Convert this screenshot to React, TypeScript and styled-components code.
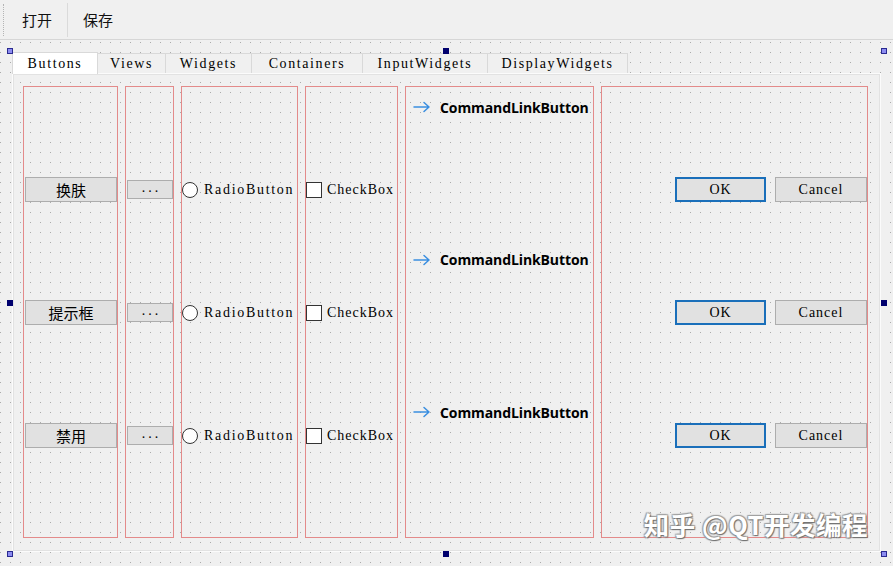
import styled, { createGlobalStyle } from "styled-components";

const GlobalStyle = createGlobalStyle`
  html, body {
    margin: 0;
    padding: 0;
    background: #f0f0f0;
    overflow: hidden;
  }
  body {
    font-family: "Liberation Serif", "Noto Sans CJK SC", serif;
  }
`;

const SERIF = `"Liberation Serif", "Noto Sans CJK SC", serif`;
const CJK = `"Noto Sans CJK SC", "Noto Sans", sans-serif`;

const Window = styled.div`
  width: 893px;
  height: 566px;
  display: flex;
  flex-direction: column;
  background: #f0f0f0;
`;

const Toolbar = styled.div`
  height: 39px;
  display: flex;
  align-items: center;
  border-bottom: 1px solid #d6d6d6;
  box-sizing: content-box;
`;

const Grip = styled.div`
  width: 0;
  height: 32px;
  margin: 0 3px;
  border-left: 1px dotted #b4b4b4;
`;

const ToolButton = styled.div`
  padding: 0 15px;
  font-family: ${CJK};
  font-size: 15px;
  line-height: 38px;
  color: #111;
`;

const ToolSeparator = styled.div`
  width: 1px;
  height: 34px;
  background: #dadada;
`;

const Canvas = styled.div`
  flex: 1;
  padding: 12px 0 0 12px;
  background-color: #f0f0f0;
  background-image: linear-gradient(90deg, #f0f0f0 9px, transparent 9px),
    linear-gradient(#f0f0f0 9px, #ababab 9px);
  background-size: 10px 10px;
  background-position: 1px 3px;
`;

const TabWidget = styled.div`
  position: relative;
  width: 869px;
  display: flex;
  flex-direction: column;
`;

const TabBar = styled.div`
  height: 21px;
  display: flex;
  align-items: flex-end;
`;

const Tab = styled.div<{ $w: number; $active?: boolean }>`
  width: ${(p) => p.$w}px;
  height: ${(p) => (p.$active ? 22 : 20)}px;
  box-sizing: border-box;
  display: flex;
  align-items: center;
  justify-content: center;
  font-family: ${SERIF};
  font-size: 14px;
  letter-spacing: 1.6px;
  color: #000;
  background: ${(p) => (p.$active ? "#ffffff" : "#f0f0f0")};
  border: 1px solid #d9d9d9;
  border-bottom: none;
  margin-left: -1px;
  margin-bottom: ${(p) => (p.$active ? "-1px" : "0")};
  position: relative;
  z-index: ${(p) => (p.$active ? 1 : 0)};
  &:first-child {
    margin-left: 0;
  }
`;

const Pane = styled.div`
  height: 479px;
  box-sizing: border-box;
  border: 1px solid #fbfbfb;
  outline: 1px solid #e2e2e2;
  outline-offset: -2px;
  padding: 12px 12px 13px 10px;
  display: flex;
  gap: 7px;
`;

const LayoutBox = styled.div<{ $w: number }>`
  width: ${(p) => p.$w}px;
  height: 452px;
  box-sizing: border-box;
  border: 1px solid #e38a8a;
  display: grid;
  grid-template-rows: repeat(3, 123px);
  align-content: center;
  align-items: center;
`;

const CommandBox = styled(LayoutBox)`
  grid-template-rows: repeat(3, 152.5px);
  align-content: start;
  align-items: start;
  padding-top: 7px;
`;

const Row = styled.div<{ $justify?: string; $gap?: number }>`
  display: flex;
  align-items: center;
  justify-content: ${(p) => p.$justify || "flex-start"};
  gap: ${(p) => p.$gap ?? 0}px;
  padding-top: 1px;
`;

const PushButton = styled.div<{ $w: number; $h?: number; $default?: boolean; $cjk?: boolean }>`
  width: ${(p) => p.$w}px;
  height: ${(p) => p.$h ?? 25}px;
  box-sizing: border-box;
  display: flex;
  align-items: center;
  justify-content: center;
  background: #e1e1e1;
  border: ${(p) => (p.$default ? "2px solid #1a6fba" : "1px solid #adadad")};
  font-family: ${(p) => (p.$cjk ? CJK : SERIF)};
  font-size: ${(p) => (p.$cjk ? "15px" : "14px")};
  letter-spacing: ${(p) => (p.$cjk ? "0" : "1px")};
  color: #000;
  white-space: nowrap;
`;

const Dots = styled(PushButton)`
  align-items: flex-end;
  padding-bottom: 2px;
  letter-spacing: 3px;
  padding-left: 3px;
`;

const Radio = styled.span`
  width: 16px;
  height: 16px;
  box-sizing: border-box;
  border-radius: 50%;
  border: 1px solid #333;
  background: #fff;
  flex: none;
`;

const Check = styled.span`
  width: 16px;
  height: 16px;
  box-sizing: border-box;
  border: 1px solid #333;
  background: #fff;
  flex: none;
`;

const Label = styled.span<{ $spacing?: number }>`
  font-family: ${SERIF};
  font-size: 14px;
  letter-spacing: ${(p) => p.$spacing ?? 1}px;
  color: #000;
  white-space: nowrap;
`;

const CommandLink = styled.div`
  height: 26px;
  display: flex;
  align-items: center;
  gap: 9px;
  padding-left: 7px;
`;

const CommandText = styled.span`
  font-family: "Open Sans", "Noto Sans", sans-serif;
  font-weight: 700;
  font-size: 14px;
  color: #000;
  white-space: nowrap;
  letter-spacing: -0.1px;
`;

const Handle = styled.div<{ $x: number; $y: number; $corner?: boolean }>`
  position: absolute;
  left: ${(p) => p.$x}px;
  top: ${(p) => p.$y}px;
  width: 6px;
  height: 6px;
  box-sizing: border-box;
  background: ${(p) => (p.$corner ? "#8c8cf0" : "#00006e")};
  border: 1px solid ${(p) => (p.$corner ? "#2a2a90" : "#00006e")};
  z-index: 3;
`;

const Watermark = styled.div`
  position: absolute;
  right: 13px;
  bottom: 10px;
  font-family: ${CJK};
  font-size: 25.5px;
  font-weight: 700;
  color: #ffffff;
  letter-spacing: 0.5px;
  text-shadow: 1px 1px 1px #6f6f6f, -1px -1px 1px #a0a0a0, 1px -1px 1px #a0a0a0,
    -1px 1px 1px #a0a0a0;
  z-index: 4;
  white-space: nowrap;
`;

const Arrow = () => (
  <svg width="18" height="12" viewBox="0 0 18 12" fill="none">
    <path
      d="M1 6 H16 M11 1.5 L16 6 L11 10.5"
      stroke="#3a8ee0"
      strokeWidth="1.5"
      strokeLinecap="round"
      strokeLinejoin="round"
    />
  </svg>
);

const tabs = [
  { name: "Buttons", w: 86 },
  { name: "Views", w: 69 },
  { name: "Widgets", w: 87 },
  { name: "Containers", w: 112 },
  { name: "InputWidgets", w: 126 },
  { name: "DisplayWidgets", w: 141 },
];

const skinButtons = ["换肤", "提示框", "禁用"];
const three = [0, 1, 2];

const handles = [
  { x: -5, y: -4, corner: true },
  { x: 431, y: -4 },
  { x: 869, y: -4, corner: true },
  { x: -5, y: 248 },
  { x: 869, y: 248 },
  { x: -5, y: 499, corner: true },
  { x: 431, y: 499 },
  { x: 869, y: 499, corner: true },
];

export default function App() {
  return (
    <Window>
      <GlobalStyle />
      <Toolbar>
        <Grip />
        <ToolButton>打开</ToolButton>
        <ToolSeparator />
        <ToolButton>保存</ToolButton>
      </Toolbar>
      <Canvas>
        <TabWidget>
          <TabBar>
            {tabs.map((t, i) => (
              <Tab key={t.name} $w={t.w} $active={i === 0}>
                {t.name}
              </Tab>
            ))}
          </TabBar>
          <Pane>
            <LayoutBox $w={95}>
              {skinButtons.map((s) => (
                <Row key={s} $justify="flex-end">
                  <PushButton $w={92} $cjk>
                    {s}
                  </PushButton>
                </Row>
              ))}
            </LayoutBox>
            <LayoutBox $w={49}>
              {three.map((i) => (
                <Row key={i} $justify="flex-end">
                  <Dots $w={46} $h={19}>
                    ...
                  </Dots>
                </Row>
              ))}
            </LayoutBox>
            <LayoutBox $w={117}>
              {three.map((i) => (
                <Row key={i} $gap={6}>
                  <Radio />
                  <Label $spacing={1.7}>RadioButton</Label>
                </Row>
              ))}
            </LayoutBox>
            <LayoutBox $w={93}>
              {three.map((i) => (
                <Row key={i} $gap={5}>
                  <Check />
                  <Label>CheckBox</Label>
                </Row>
              ))}
            </LayoutBox>
            <CommandBox $w={189}>
              {three.map((i) => (
                <CommandLink key={i}>
                  <Arrow />
                  <CommandText>CommandLinkButton</CommandText>
                </CommandLink>
              ))}
            </CommandBox>
            <LayoutBox $w={267}>
              {three.map((i) => (
                <Row key={i} $justify="flex-end" $gap={9}>
                  <PushButton $w={91} $default>
                    OK
                  </PushButton>
                  <PushButton $w={92}>Cancel</PushButton>
                </Row>
              ))}
            </LayoutBox>
          </Pane>
          {handles.map((h, i) => (
            <Handle key={i} $x={h.x} $y={h.y} $corner={h.corner} />
          ))}
          <Watermark>知乎 @QT开发编程</Watermark>
        </TabWidget>
      </Canvas>
    </Window>
  );
}
